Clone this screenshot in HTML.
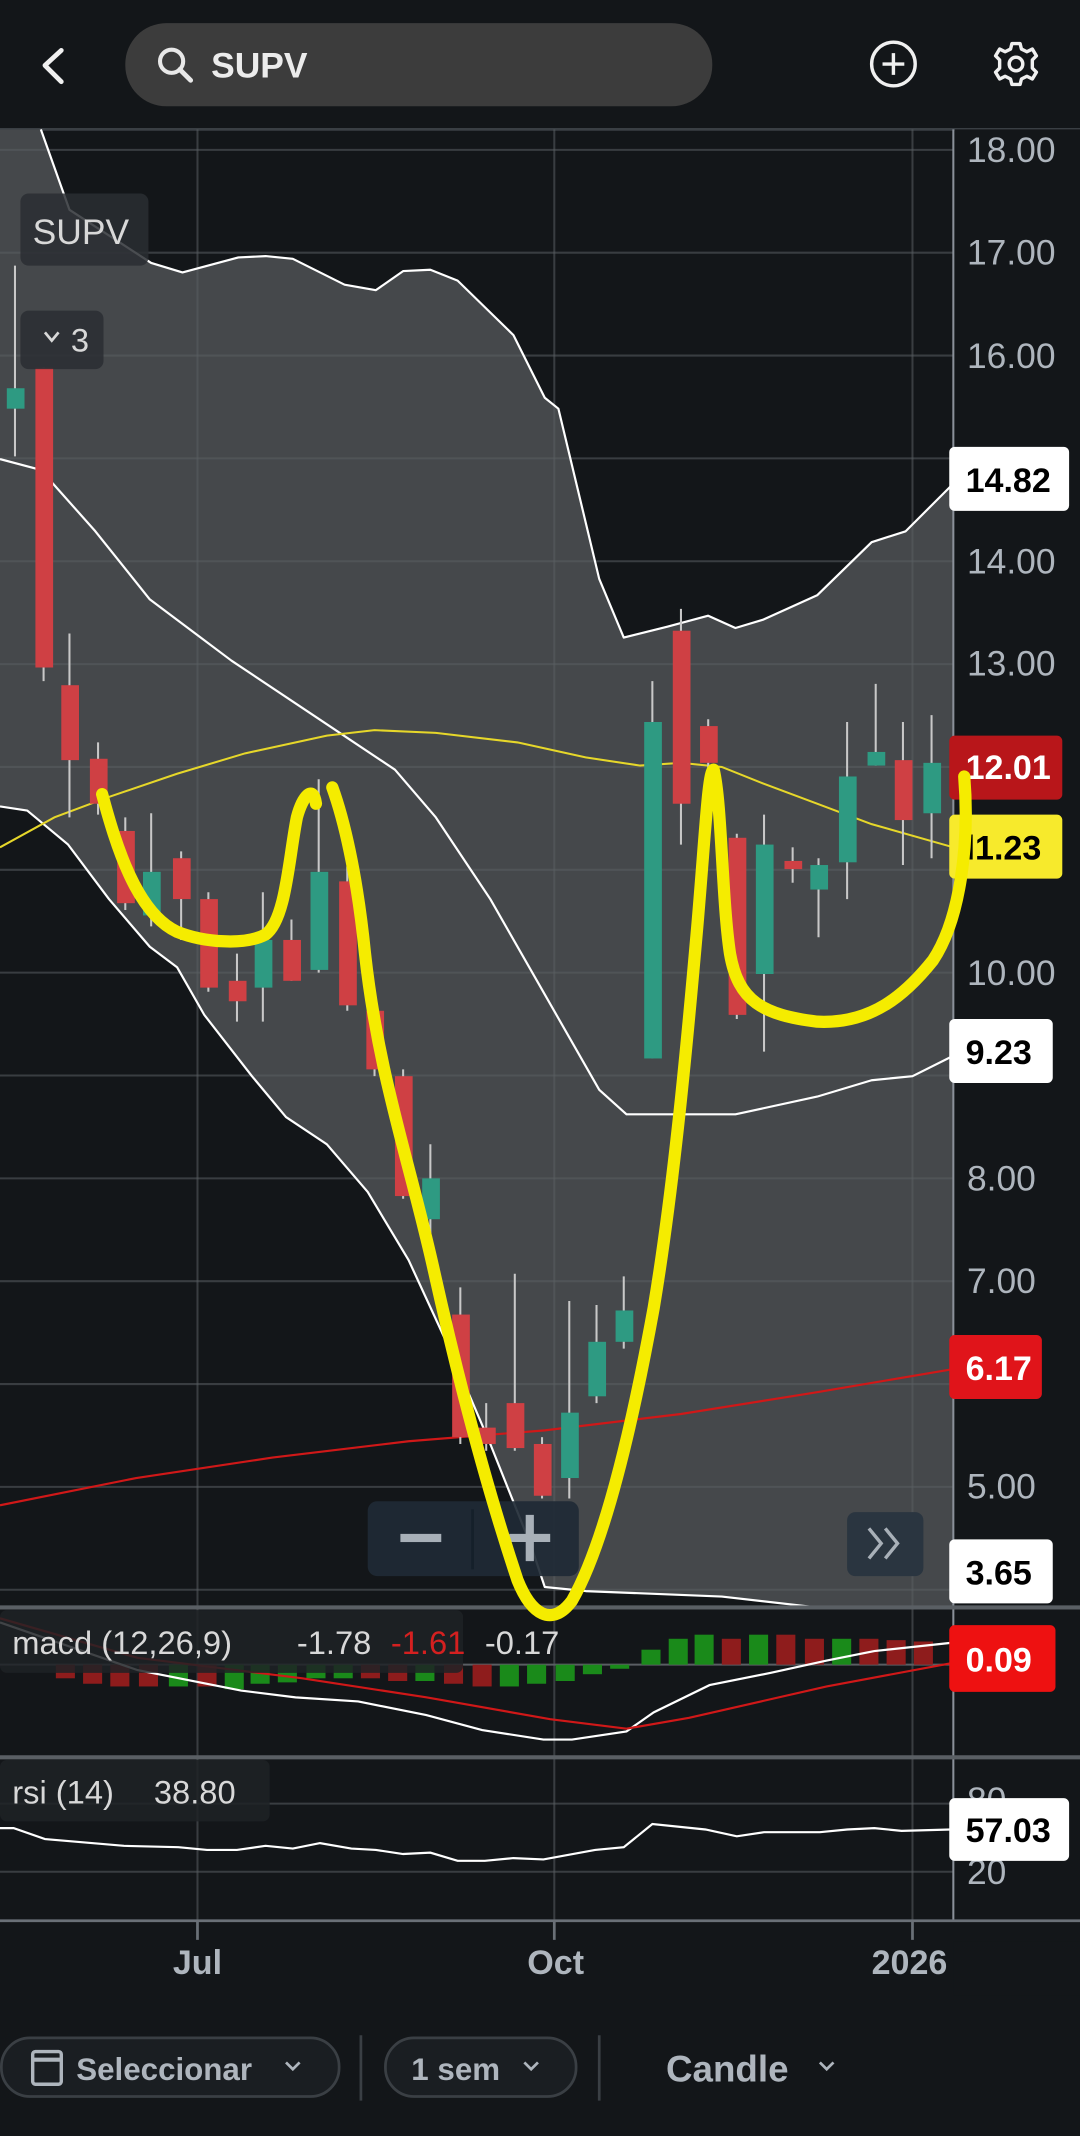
<!DOCTYPE html>
<html><head><meta charset="utf-8"><style>
html,body{margin:0;padding:0;background:#131619;width:1080px;height:2136px;overflow:hidden}
svg{display:block}
text{font-family:"Liberation Sans",sans-serif}
</style></head><body>
<svg width="1080" height="2136" viewBox="0 0 793 1568" preserveAspectRatio="none" xmlns="http://www.w3.org/2000/svg">
<rect width="793" height="1568" fill="#131619"/>
<!-- top bar -->
<path d="M45 37 L33 48 L45 60" stroke="#f0f0f0" stroke-width="3.5" fill="none" stroke-linecap="round" stroke-linejoin="round"/>
<rect x="92" y="17" width="431" height="61" rx="30" fill="#3c3c3c"/>
<circle cx="126" cy="45" r="8.5" stroke="#e8e8e8" stroke-width="3" fill="none"/>
<line x1="132" y1="51" x2="140" y2="59" stroke="#e8e8e8" stroke-width="3.5" stroke-linecap="round"/>
<text x="155" y="57" font-size="26" font-weight="bold" fill="#ececec">SUPV</text>
<circle cx="656" cy="47" r="16" stroke="#f0f0f0" stroke-width="2.5" fill="none"/>
<path d="M656 39 V55 M648 47 H664" stroke="#f0f0f0" stroke-width="2.5"/>
<g transform="translate(746,47)" stroke="#f0f0f0" stroke-width="2.5" fill="none">
<circle r="5"/>
<path d="M-3 -15 H3 L4 -11 L8 -9 L12 -11 L15 -6 L12 -3 L12 3 L15 6 L12 11 L8 9 L4 11 L3 15 H-3 L-4 11 L-8 9 L-12 11 L-15 6 L-12 3 L-12 -3 L-15 -6 L-12 -11 L-8 -9 L-4 -11 Z" stroke-linejoin="round"/>
</g>
<line x1="0" y1="95" x2="793" y2="95" stroke="#3a3f44" stroke-width="2"/>

<!-- bollinger fill -->
<polygon fill="#45484b" points="0,95 30,95 51,154 111,193 134,200 175,189 195,188 215,190 253,209 276,213 296,199 316,198 336,206 377,246 400,292 410,300 440,425 458,468 490,460 520,452 540,461 560,455 600,437 640,398 665,390 700,355 700,1180 600,1180 530,1172 430,1168 400,1165 390,1135 360,1060 330,990 300,925 270,875 240,840 210,820 185,790 150,745 130,710 110,695 80,660 50,620 20,595 0,592"/>

<!-- grid -->
<g stroke="#5a5e63" stroke-opacity="0.55" stroke-width="1.5">
<line x1="0" y1="110" x2="700" y2="110"/><line x1="0" y1="185.5" x2="700" y2="185.5"/><line x1="0" y1="261" x2="700" y2="261"/><line x1="0" y1="336.5" x2="700" y2="336.5"/><line x1="0" y1="412" x2="700" y2="412"/><line x1="0" y1="487.5" x2="700" y2="487.5"/><line x1="0" y1="563" x2="700" y2="563"/><line x1="0" y1="638.5" x2="700" y2="638.5"/><line x1="0" y1="714" x2="700" y2="714"/><line x1="0" y1="789.5" x2="700" y2="789.5"/><line x1="0" y1="865" x2="700" y2="865"/><line x1="0" y1="940.5" x2="700" y2="940.5"/><line x1="0" y1="1016" x2="700" y2="1016"/><line x1="0" y1="1091.5" x2="700" y2="1091.5"/><line x1="0" y1="1167" x2="700" y2="1167"/>
<line x1="145" y1="95" x2="145" y2="1410"/><line x1="407" y1="95" x2="407" y2="1410"/><line x1="670" y1="95" x2="670" y2="1410"/>
<line x1="0" y1="1324" x2="700" y2="1324"/><line x1="0" y1="1374" x2="700" y2="1374"/>
</g>

<!-- bands -->
<g fill="none" stroke="#ffffff" stroke-width="1.6" stroke-linejoin="round">
<polyline points="30,95 51,154 111,193 134,200 175,189 195,188 215,190 253,209 276,213 296,199 316,198 336,206 377,246 400,292 410,300 440,425 458,468 490,460 520,452 540,461 560,455 600,437 640,398 665,390 700,355"/>
<polyline points="0,337 30,345 70,390 110,440 170,485 230,525 290,565 320,600 360,660 400,730 440,800 460,818 540,818 600,805 640,793 670,790 700,775"/>
<polyline points="0,592 20,595 50,620 80,660 110,695 130,710 150,745 185,790 210,820 240,840 270,875 300,925 330,990 360,1060 390,1135 400,1165 430,1168 530,1172 600,1180"/>
</g>
<polyline fill="none" stroke="#e6d72a" stroke-width="1.5" points="0,622 40,600 80,585 130,568 180,553 240,540 275,536 320,538 380,545 430,556 470,562 500,560 530,563 560,575 600,590 640,605 700,622"/>
<polyline fill="none" stroke="#d01818" stroke-width="1.6" points="0,1105 100,1085 200,1070 300,1058 400,1050 500,1038 600,1022 700,1005"/>

<!-- candles -->
<g stroke="#c8c8c8" stroke-width="1.5">
<line x1="11" y1="195" x2="11" y2="335"/><line x1="32" y1="270" x2="32" y2="500"/><line x1="51" y1="465" x2="51" y2="600"/><line x1="72" y1="545" x2="72" y2="598"/><line x1="92" y1="600" x2="92" y2="668"/><line x1="111" y1="597" x2="111" y2="680"/><line x1="133" y1="625" x2="133" y2="690"/><line x1="153" y1="655" x2="153" y2="728"/><line x1="174" y1="700" x2="174" y2="750"/><line x1="193" y1="655" x2="193" y2="750"/><line x1="214" y1="675" x2="214" y2="720"/><line x1="234" y1="572" x2="234" y2="714"/><line x1="255" y1="636" x2="255" y2="742"/><line x1="275" y1="740" x2="275" y2="790"/><line x1="296" y1="785" x2="296" y2="880"/><line x1="316" y1="840" x2="316" y2="910"/><line x1="338" y1="945" x2="338" y2="1060"/><line x1="357" y1="1030" x2="357" y2="1065"/><line x1="378" y1="935" x2="378" y2="1065"/><line x1="398" y1="1055" x2="398" y2="1100"/><line x1="418" y1="955" x2="418" y2="1100"/><line x1="438" y1="958" x2="438" y2="1030"/><line x1="458" y1="937" x2="458" y2="990"/><line x1="479" y1="500" x2="479" y2="777"/><line x1="500" y1="447" x2="500" y2="620"/><line x1="520" y1="528" x2="520" y2="600"/><line x1="541" y1="612" x2="541" y2="748"/><line x1="561" y1="598" x2="561" y2="772"/><line x1="582" y1="622" x2="582" y2="648"/><line x1="601" y1="630" x2="601" y2="688"/><line x1="622" y1="530" x2="622" y2="660"/><line x1="643" y1="502" x2="643" y2="562"/><line x1="663" y1="530" x2="663" y2="635"/><line x1="684" y1="525" x2="684" y2="630"/>
</g>
<g fill="#cf4044">
<rect x="26" y="270" width="13" height="220"/><rect x="45" y="503" width="13" height="55"/><rect x="66" y="557" width="13" height="33"/><rect x="86" y="610" width="13" height="53"/><rect x="127" y="630" width="13" height="30"/><rect x="147" y="660" width="13" height="65"/><rect x="168" y="720" width="13" height="15"/><rect x="208" y="690" width="13" height="30"/><rect x="249" y="647" width="13" height="91"/><rect x="269" y="742" width="13" height="43"/><rect x="290" y="790" width="13" height="88"/><rect x="332" y="965" width="13" height="90"/><rect x="351" y="1048" width="13" height="12"/><rect x="372" y="1030" width="13" height="33"/><rect x="392" y="1060" width="13" height="38"/><rect x="494" y="463" width="13" height="127"/><rect x="514" y="533" width="13" height="27"/><rect x="535" y="615" width="13" height="130"/><rect x="576" y="632" width="13" height="6"/><rect x="657" y="558" width="13" height="44"/>
</g>
<g fill="#2e9a82">
<rect x="5" y="285" width="13" height="15"/><rect x="105" y="640" width="13" height="32"/><rect x="187" y="690" width="13" height="35"/><rect x="228" y="640" width="13" height="72"/><rect x="310" y="865" width="13" height="30"/><rect x="412" y="1037" width="13" height="48"/><rect x="432" y="985" width="13" height="40"/><rect x="452" y="962" width="13" height="23"/><rect x="473" y="530" width="13" height="247"/><rect x="555" y="620" width="13" height="95"/><rect x="595" y="635" width="13" height="18"/><rect x="616" y="570" width="13" height="63"/><rect x="637" y="552" width="13" height="10"/><rect x="678" y="560" width="13" height="37"/>
</g>

<!-- overlays -->
<rect x="15" y="142" width="94" height="53" rx="6" fill="#2a2e33" fill-opacity="0.85"/>
<text x="24" y="179" font-size="26" fill="#d8d8d8">SUPV</text>
<rect x="15" y="228" width="61" height="43" rx="6" fill="#2a2e33" fill-opacity="0.85"/>
<path d="M33 244 L38 250 L43 244" stroke="#d8d8d8" stroke-width="2" fill="none"/>
<text x="52" y="258" font-size="24" fill="#d8d8d8">3</text>

<rect x="270" y="1102" width="155" height="55" rx="7" fill="#1f2a35" fill-opacity="0.92"/>
<line x1="347" y1="1108" x2="347" y2="1152" stroke="#15202a" stroke-width="2"/>
<rect x="294" y="1126" width="30" height="6" fill="#a8b0b8"/>
<path d="M389 1112 V1146 M374 1129 H404" stroke="#a8b0b8" stroke-width="6"/>
<rect x="622" y="1110" width="56" height="47" rx="6" fill="#2a3540"/>
<path d="M638 1122 L647 1133 L638 1144 M650 1122 L659 1133 L650 1144" stroke="#a8b0b8" stroke-width="2.5" fill="none"/>

<!-- right axis -->
<rect x="701" y="95" width="92" height="1315" fill="#131619"/>
<line x1="700" y1="95" x2="700" y2="1410" stroke="#8a9099" stroke-width="1.5"/>
<g fill="#aeb5bd" font-size="26">
<text x="710" y="119">18.00</text><text x="710" y="194">17.00</text><text x="710" y="270">16.00</text><text x="710" y="421">14.00</text><text x="710" y="496">13.00</text><text x="710" y="723">10.00</text><text x="710" y="874">8.00</text><text x="710" y="949">7.00</text><text x="710" y="1100">5.00</text>
<text x="710" y="1330">80</text><text x="710" y="1383">20</text>
</g>
<g font-size="25" font-weight="bold">
<rect x="697" y="328" width="88" height="47" rx="4" fill="#ffffff"/><text x="709" y="361" fill="#000">14.82</text>
<rect x="697" y="540" width="83" height="47" rx="4" fill="#b8161a"/><text x="709" y="572" fill="#fff">12.01</text>
<rect x="697" y="598" width="83" height="47" rx="4" fill="#f7ea2c"/><text x="709" y="631" fill="#000">l1.23</text>
<rect x="697" y="748" width="76" height="47" rx="4" fill="#ffffff"/><text x="709" y="781" fill="#000">9.23</text>
<rect x="697" y="980" width="68" height="47" rx="4" fill="#e0141a"/><text x="709" y="1013" fill="#fff">6.17</text>
<rect x="697" y="1130" width="76" height="47" rx="4" fill="#ffffff"/><text x="709" y="1163" fill="#000">3.65</text>
</g>

<!-- macd panel -->
<line x1="0" y1="1180" x2="793" y2="1180" stroke="#5a5f64" stroke-width="3"/>
<line x1="0" y1="1222" x2="700" y2="1222" stroke="#5a5e63" stroke-width="1.5"/>
<g fill="#8e1c1c">
<rect x="41" y="1222" width="14" height="10"/><rect x="61" y="1222" width="14" height="14"/><rect x="81" y="1222" width="14" height="16"/><rect x="102" y="1222" width="14" height="16"/><rect x="145" y="1222" width="14" height="16"/><rect x="265" y="1222" width="14" height="10"/><rect x="285" y="1222" width="14" height="12"/><rect x="326" y="1222" width="14" height="14"/><rect x="347" y="1222" width="14" height="16"/>
<rect x="530" y="1203" width="14" height="19"/><rect x="570" y="1200" width="14" height="22"/><rect x="591" y="1203" width="14" height="19"/><rect x="631" y="1203" width="14" height="19"/><rect x="651" y="1204" width="14" height="18"/><rect x="671" y="1205" width="14" height="17"/>
</g>
<g fill="#1a8a1a">
<rect x="124" y="1222" width="14" height="16"/><rect x="165" y="1222" width="14" height="18"/><rect x="184" y="1222" width="14" height="14"/><rect x="204" y="1222" width="14" height="13"/><rect x="225" y="1222" width="14" height="10"/><rect x="245" y="1222" width="14" height="10"/><rect x="305" y="1222" width="14" height="12"/><rect x="367" y="1222" width="14" height="16"/><rect x="387" y="1222" width="14" height="14"/><rect x="408" y="1222" width="14" height="12"/><rect x="428" y="1222" width="14" height="7"/><rect x="448" y="1222" width="14" height="3"/>
<rect x="471" y="1211" width="14" height="11"/><rect x="491" y="1203" width="14" height="19"/><rect x="510" y="1200" width="14" height="22"/><rect x="550" y="1200" width="14" height="22"/><rect x="611" y="1203" width="14" height="19"/>
</g>
<polyline fill="none" stroke="#ffffff" stroke-width="1.6" points="0,1191 101,1226 177,1241 217,1246 263,1249 313,1259 354,1270 399,1277 420,1277 460,1271 480,1257 521,1237 566,1228 607,1219 642,1212 698,1206"/>
<polyline fill="none" stroke="#d01818" stroke-width="1.6" points="0,1188 101,1217 222,1232 313,1246 404,1262 460,1269 506,1261 607,1238 698,1221"/>
<rect x="0" y="1182" width="340" height="46" rx="5" fill="#1e2226" fill-opacity="0.85"/>
<text x="9" y="1214" font-size="24" fill="#d8d8d8">macd (12,26,9)</text>
<text x="218" y="1214" font-size="24" fill="#d8d8d8">-1.78</text>
<text x="287" y="1214" font-size="24" fill="#d42020">-1.61</text>
<text x="356" y="1214" font-size="24" fill="#d8d8d8">-0.17</text>
<rect x="697" y="1193" width="78" height="49" rx="4" fill="#ee1111"/>
<text x="709" y="1227" font-size="25" font-weight="bold" fill="#fff">0.09</text>

<!-- rsi -->
<line x1="0" y1="1290" x2="793" y2="1290" stroke="#5a5f64" stroke-width="3"/>
<polyline fill="none" stroke="#ffffff" stroke-width="1.6" points="0,1342 10,1342 33,1350 91,1355 131,1356 152,1358 174,1358 195,1355 215,1357 235,1353 258,1357 276,1358 296,1361 316,1360 336,1366 356,1366 377,1364 399,1365 437,1358 458,1356 479,1339 518,1343 541,1348 561,1345 602,1345 622,1343 642,1342 662,1344 698,1343"/>
<rect x="0" y="1292" width="198" height="45" rx="5" fill="#1e2226" fill-opacity="0.85"/>
<text x="9" y="1324" font-size="24" fill="#d8d8d8">rsi (14)</text>
<text x="113" y="1324" font-size="24" fill="#d8d8d8">38.80</text>
<rect x="697" y="1320" width="88" height="46" rx="4" fill="#ffffff"/>
<text x="709" y="1352" font-size="25" font-weight="bold" fill="#000">57.03</text>

<!-- x axis -->
<line x1="0" y1="1410" x2="793" y2="1410" stroke="#6a7077" stroke-width="2"/>
<path d="M145 1410 V1424 M407 1410 V1424 M670 1410 V1424" stroke="#6a7077" stroke-width="2"/>
<g fill="#aeb5bd" font-size="25" font-weight="bold">
<text x="145" y="1449" text-anchor="middle">Jul</text><text x="408" y="1449" text-anchor="middle">Oct</text><text x="640" y="1449">2026</text>
</g>
<rect x="700" y="1425" width="93" height="40" fill="#131619"/>

<!-- yellow drawing -->
<path fill="none" stroke="#f5ec00" stroke-width="9" stroke-linecap="round" stroke-linejoin="round" d="M75 583 C85 620 100 670 130 684 C150 692 180 694 195 686 C210 675 212 630 218 600 C222 585 230 575 232 590 M244 578 C252 600 262 640 268 700 C278 790 300 850 318 930 C338 1020 360 1100 380 1160 C390 1185 405 1195 420 1175 C440 1140 460 1070 480 960 C495 870 505 760 512 680 C518 610 520 565 524 565 C530 590 530 660 536 700 C542 735 560 745 600 750 C640 752 665 730 685 705 C705 675 712 620 708 570"/>

<!-- bottom bar -->
<rect x="1" y="1496" width="248" height="43" rx="21" fill="#1a1e22" stroke="#3a3f44" stroke-width="2"/>
<rect x="24" y="1506" width="21" height="24" rx="2" fill="none" stroke="#aeb5bd" stroke-width="2.5"/>
<line x1="24" y1="1512" x2="45" y2="1512" stroke="#aeb5bd" stroke-width="3"/>
<text x="56" y="1527" font-size="23" font-weight="bold" fill="#aeb5bd">Seleccionar</text>
<path d="M210 1514 L215 1519 L220 1514" stroke="#aeb5bd" stroke-width="2" fill="none"/>
<line x1="265" y1="1494" x2="265" y2="1542" stroke="#3a3f44" stroke-width="2"/>
<rect x="283" y="1496" width="140" height="43" rx="21" fill="#1a1e22" stroke="#3a3f44" stroke-width="2"/>
<text x="302" y="1527" font-size="23" font-weight="bold" fill="#aeb5bd">1 sem</text>
<path d="M385 1514 L390 1519 L395 1514" stroke="#aeb5bd" stroke-width="2" fill="none"/>
<line x1="440" y1="1494" x2="440" y2="1542" stroke="#3a3f44" stroke-width="2"/>
<text x="489" y="1528" font-size="27" font-weight="bold" fill="#aeb5bd">Candle</text>
<path d="M602 1514 L607 1519 L612 1514" stroke="#aeb5bd" stroke-width="2" fill="none"/>
</svg>
</body></html>
